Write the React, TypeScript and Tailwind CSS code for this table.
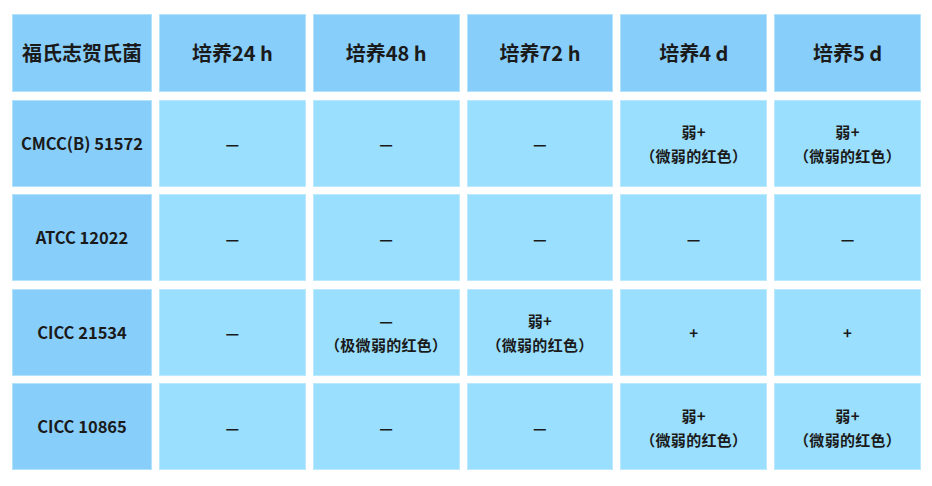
import React from 'react';

type Row = { strain: string; values: string[][] };

const headers = ['培养24 h', '培养48 h', '培养72 h', '培养4 d', '培养5 d'];

const weak = ['弱+', '（微弱的红色）'];

const rows: Row[] = [
  { strain: 'CMCC(B) 51572', values: [['—'], ['—'], ['—'], weak, weak] },
  { strain: 'ATCC 12022', values: [['—'], ['—'], ['—'], ['—'], ['—']] },
  { strain: 'CICC 21534', values: [['—'], ['—', '（极微弱的红色）'], weak, ['+'], ['+']] },
  { strain: 'CICC 10865', values: [['—'], ['—'], ['—'], weak, weak] },
];

const font = { fontFamily: '"Noto Sans CJK SC", "Noto Sans", sans-serif' };

export default function App() {
  return (
    <div className="w-[932px] h-[486px] bg-white pl-[12px] pr-[11px] pt-[14px]" style={font}>
      <div className="grid grid-cols-[140px_repeat(5,1fr)] grid-rows-[78px_repeat(4,87px)] gap-x-[7px] gap-y-[7.5px] text-[#1a1a1a] font-bold">
        <div className="flex items-center justify-center bg-[#88cefa] border border-[#b3e2fb] text-[20px]">福氏志贺氏菌</div>
        {headers.map(h => (
          <div key={h} className="flex items-center justify-center bg-[#88cefa] border border-[#b3e2fb] text-[20px]">
            {h}
          </div>
        ))}
        {rows.map(row => (
          <React.Fragment key={row.strain}>
            <div className="flex items-center justify-center bg-[#88cefa] border border-[#b3e2fb] text-[16.5px]">
              {row.strain}
            </div>
            {row.values.map((lines, i) => (
              <div
                key={i}
                className="flex flex-col items-center justify-center bg-[#9adffd] border border-[#bce9fd] text-[15px] leading-[24px] tracking-[0.3px] pt-[2px]"
              >
                {lines.map((l, j) => (
                  <span key={j}>{l}</span>
                ))}
              </div>
            ))}
          </React.Fragment>
        ))}
      </div>
    </div>
  );
}
